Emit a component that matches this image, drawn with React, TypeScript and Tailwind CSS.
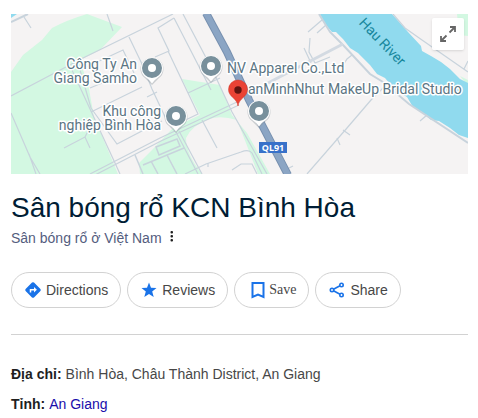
import type { ReactNode } from "react";
import { clsx } from "clsx";

const placePins = [
  { x: 141, y: 54 },
  { x: 200, y: 52 },
  { x: 165, y: 102 },
  { x: 248, y: 97 },
];

const mapLabels = [
  { lines: ["Công Ty An", "Giang Samho"], x: 126, y: 55, end: true },
  { lines: ["Khu công", "nghiệp Bình Hòa"], x: 150, y: 102, end: true },
  { lines: ["NV Apparel Co.,Ltd"], x: 216, y: 59, end: false },
  { lines: ["anMinhNhut MakeUp Bridal Studio"], x: 237, y: 80, end: false },
];

function PlacePin({ x, y }: { x: number; y: number }) {
  return (
    <g transform={`translate(${x} ${y})`}>
      <path d="M0 17 L-7 10 A11.5 11.5 0 1 1 7 10 Z" fill="#8a949c" opacity="0.4" />
      <path d="M0 15.5 Q-2 12 -6 9.5 A11 11 0 1 1 6 9.5 Q2 12 0 15.5 Z" fill="#fff" />
      <circle r="7" fill="none" stroke="#78909c" strokeWidth="6" />
    </g>
  );
}

function MapView() {
  return (
    <svg
      viewBox="0 0 457 160"
      preserveAspectRatio="xMidYMid slice"
      className="block h-40 w-full bg-[#f5f3f3]"
      role="img"
      aria-label="Map of Bình Hòa"
    >
      {/* parks */}
      <g fill="#d3f8e2">
        <path d="M0 58 L12 41 L31 26 L41 14 Q56 6 76 0 L111 13 L89 36 L69 46 L78 75 L83 103 L107 160 H0 Z" />
        <path d="M171 65 L209 71 L221 101 L236 119 L259 160 H247 L226 106 Q210 101 198 105 Q180 112 175 124 Q175 140 191 160 H129 L128 149 L141 136 L163 113 L189 101 Z" />
        <path d="M446 0 H457 V22 L448 21 Z" />
        <path d="M449 62 L457 66 V72 Z" />
      </g>

      {/* water */}
      <path d="M0 0 H6 L0 4 Z" fill="#90daee" />
      <path
        d="M309 0 L314 10 L321 18 L325 18 L332 25 L339 34 L347 39 L359 51 L366 60 L374 64 L384 76 L396 83 L402 93 L411 98 L420 106 L428 107 L439 114 L448 121 L457 124 V69 L449 65 L439 55 L430 48 L420 42 L411 37 L410 32 L397 18 L381 0 Z"
        fill="#90daee"
      />

      {/* minor roads */}
      <g fill="none" stroke="#c8d3dc" strokeWidth="1.2">
        <path d="M0 82 L72 44 L162 0" />
        <path d="M13 3 L20 14 M96 0 L102 17" />
        <path d="M0 99 L19 143 L29 160 M18 140 L25 160" />
        <path d="M61 56 L104 149 L109 160" />
        <path d="M80 94 L106 130 L129 118 L151 107" />
        <path d="M69 56 L80 94 M69 56 L112 36 L123 59" />
        <path d="M79 74 L91 69 M80 98 L131 73" />
        <path d="M118 23 L131 50 L141 75 L156 107 M136 83 L146 78" />
        <path d="M53 134 L74 123 L79 134 M74 123 L78 115" />
        <path d="M79 160 L149 124 L226 88 M84 161 L150 127 L228 91" />
        <path d="M163 4 L147 14 L158 37 L144 43 M157 37 L187 100 L160 113" />
        <path d="M163 4 L200 76 M172 0 L201 55 L221 98 L256 160" />
        <path d="M177 79 L209 64 M191 106 L206 134" />
        <path d="M165 118 L187 160 M168 117 L191 160" />
        <path d="M174 160 L195 150 L230 138 Q238 135 241 139 L251 160" />
        <path d="M221 156 L230 150 H241 L246 160 M197 149 V153" />
        <path d="M299 24 L298 38 L304 49 L319 43 M293 34 L300 49" />
        <path d="M297 18 L311 6 M306 19 L315 11 M331 53 L336 45 L341 41" />
        <path d="M296 160 L336 114 L360 86 L373 73" />
        <path d="M326 124 L329 131 M332 116 L339 121 M416 101 L409 107" />
        <path d="M382 0 L394 14 L411 26 L457 58 M453 55 L457 47" />
        <path d="M276 155 L282 152" />
      </g>

      {/* wider streets */}
      <g fill="none" stroke="#c8d3dc" strokeWidth="2">
        <path d="M0 8 L17 0 M308 0 L319 18 L333 32 L359 60 L372 68 L398 90 L457 129" />
        <path d="M257 69 L332 30" stroke="#d3dae2" strokeWidth="3" />
        <g strokeWidth="1.500">
          <path d="M124 141 L132 160 M140 147 L147 160 M156 141 L166 160" />
          <path d="M132 151 L173 134 M145 133 L166 125 L169 132 L148 141 Z" />
        </g>
      </g>

      {/* highway */}
      <path d="M195 -1 L216 38 L238 86 L277 161" fill="none" stroke="#7891b0" strokeWidth="8" />
      <path d="M195 -1 L216 38 L238 86 L277 161" fill="none" stroke="#8ba5c4" strokeWidth="6" />

      <rect x="248" y="128" width="28" height="11" fill="#3871c9" />
      <text x="262" y="137" textAnchor="middle" className="fill-white font-['Noto_Sans'] text-[9px] font-bold">
        QL91
      </text>

      <text
        transform="translate(368 31) rotate(46)"
        textAnchor="middle"
        className="fill-[#16869b] font-[Roboto] text-[14px]"
      >
        Hau River
      </text>

      {mapLabels.map((label) => (
        <text
          key={label.lines[0]}
          y={label.y}
          textAnchor={label.end ? "end" : "start"}
          stroke="#fff"
          strokeWidth="3"
          strokeLinejoin="round"
          paintOrder="stroke"
          className="fill-[#5b7583] font-[Roboto] text-[14px]"
        >
          {label.lines.map((line, i) => (
            <tspan key={line} x={label.x} dy={i === 0 ? 0 : 14}>
              {line}
            </tspan>
          ))}
        </text>
      ))}

      {placePins.map((pin) => (
        <PlacePin key={`${pin.x}-${pin.y}`} x={pin.x} y={pin.y} />
      ))}

      {/* selected place */}
      <g transform="translate(227 76)">
        <path d="M0 16 C-1 8 -9.500 7 -9.500 -0.500 A9.500 9.500 0 0 1 9.500 -0.500 C9.500 7 1 8 0 16 Z" fill="#ea4335" stroke="#d33426" strokeWidth="0.500" />
        <circle r="3.700" fill="#601410" />
      </g>
    </svg>
  );
}

function ActionButton({ icon, label, className }: { icon: ReactNode; label: string; className?: string }) {
  return (
    <button
      type="button"
      className={clsx(
        "flex h-9 items-center rounded-full border border-[#d2d2d2] bg-white px-3 text-sm text-[#474747]",
        className,
      )}
    >
      {icon}
      {label}
    </button>
  );
}

export default function App() {
  return (
    <main className="bg-white pt-3.5 pr-2.5 pb-1 pl-[11px] font-['Liberation_Sans',Arial,sans-serif]">
      <div className="relative">
        <MapView />
        <button
          type="button"
          aria-label="Expand map"
          className="absolute top-1 right-1 flex size-8 items-center justify-center rounded-xs bg-white/95 shadow-sm"
        >
          <svg viewBox="0 0 18 18" className="size-[18px]" fill="none" stroke="#666" strokeWidth="1.800">
            <path d="M11 2 H16 V7 M16 2 L10.500 7.500 M2 11 V16 H7 M2 16 L7.500 10.500" />
          </svg>
        </button>
      </div>

      <h1 className="mt-4 text-[28px] leading-9 text-[#001d35]">Sân bóng rổ KCN Bình Hòa</h1>
      <div className="flex items-center gap-1 text-sm text-[#545d7e]">
        <span className="leading-6">Sân bóng rổ ở Việt Nam</span>
        <button type="button" aria-label="More options" className="flex h-4 w-3 justify-center">
          <svg viewBox="0 0 4 16" className="h-4 w-1" fill="#1f1f1f">
            <rect x="0.500" y="1" width="2.500" height="2.500" rx="1" />
            <rect x="0.500" y="5" width="2.500" height="2.500" rx="1" />
            <rect x="0.500" y="9" width="2.500" height="2.500" rx="1" />
          </svg>
        </button>
      </div>

      <div className="mt-[22px] flex flex-wrap gap-1.5">
        <ActionButton
          label="Directions"
          className="gap-1"
          icon={
            <svg viewBox="0 0 18 18" className="size-[18px]">
              <path d="M9 1.200 Q9.600 1.200 10 1.600 L16.400 8 Q17.200 9 16.400 10 L10 16.400 Q9 17.200 8 16.400 L1.600 10 Q0.800 9 1.600 8 L8 1.600 Q8.400 1.200 9 1.200 Z" fill="#1a73e8" />
              <path d="M6.500 11.500 V8.700 H11" fill="none" stroke="#fff" strokeWidth="1.500" />
              <path d="M10 5.900 L12.900 8.700 L10 11.500 Z" fill="#fff" />
            </svg>
          }
        />
        <ActionButton
          label="Reviews"
          className="gap-1"
          icon={
            <svg viewBox="0 0 18 18" className="size-[18px]" fill="#1a73e8">
              <path d="M9 1.500 L11 6.800 L16.500 7.100 L12.200 10.500 L13.700 16 L9 12.900 L4.300 16 L5.800 10.500 L1.500 7.100 L7 6.800 Z" />
            </svg>
          }
        />
        <ActionButton
          label="Save"
          className="gap-0.5 font-['Liberation_Serif',serif]"
          icon={
            <svg viewBox="0 0 18 18" className="ml-0.5 size-[18px]" fill="none" stroke="#1a73e8" strokeWidth="2">
              <path d="M3.500 2 H14.500 V16 L9 13.500 L3.500 16 Z" />
            </svg>
          }
        />
        <ActionButton
          label="Share"
          className="gap-1"
          icon={
            <svg viewBox="0 0 18 18" className="size-[18px]" fill="none" stroke="#1a73e8" strokeWidth="1.600">
              <path d="M5.500 8.200 L12 4.800 M5.500 9.800 L12 13.200" />
              <circle cx="4" cy="9" r="1.700" />
              <circle cx="13.500" cy="4" r="1.700" />
              <circle cx="13.500" cy="14" r="1.700" />
            </svg>
          }
        />
      </div>

      <hr className="mt-[26px] border-[#d2d2d2]" />

      <dl className="mt-6 text-sm leading-[30px] text-[#474747]">
        <div className="flex gap-1">
          <dt className="font-bold text-[#1f1f1f]">Địa chỉ:</dt>
          <dd>Bình Hòa, Châu Thành District, An Giang</dd>
        </div>
        <div className="flex gap-1">
          <dt className="font-bold text-[#1f1f1f]">Tỉnh:</dt>
          <dd>
            <a href="#an-giang" className="text-[#1a0dab]">
              An Giang
            </a>
          </dd>
        </div>
      </dl>
    </main>
  );
}
